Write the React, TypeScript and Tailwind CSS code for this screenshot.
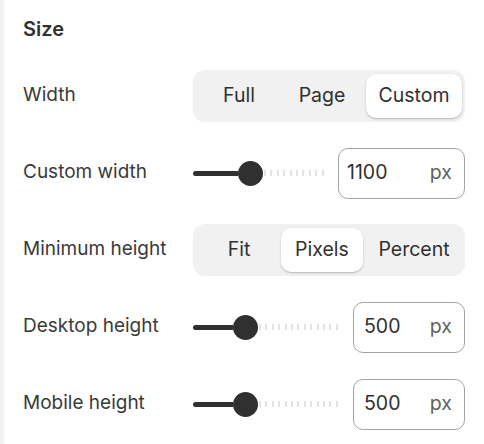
import React from "react"

type SegOption = { label: string; width: string }

const Segmented = ({ options, active }: { options: SegOption[]; active: number }) => (
  <div className="flex h-[52px] w-[272px] items-stretch rounded-[12px] bg-[#f1f1f1] py-1 pl-1 pr-[3px]">
    {options.map((opt, i) => (
      <div
        key={opt.label}
        className={`flex items-center justify-center pb-[1px] text-[19.5px] ${opt.width} ${i === options.length - 1 ? "ml-auto" : ""} ${
          i === active
            ? "rounded-[10px] bg-white shadow-[0_1px_1px_rgba(0,0,0,0.12),0_1px_3px_rgba(0,0,0,0.14)]"
            : ""
        }`}
      >
        {opt.label}
      </div>
    ))}
  </div>
)

const Slider = ({ fill }: { fill: number }) => (
  <div className="flex flex-1 items-center">
    <div className="h-[5px] rounded-l-full bg-[#303030]" style={{ width: fill }} />
    <div className="h-[25px] w-[25px] shrink-0 rounded-full bg-[#303030]" />
    <div className="ml-[1px] h-[6px] flex-1 rounded-r-[2px] bg-[repeating-linear-gradient(90deg,#e3e3e3_0_2px,transparent_2px_6.4px)]" />
  </div>
)

const NumberInput = ({ value, width, pl }: { value: string; width: string; pl: string }) => (
  <div
    className={`flex h-[51px] shrink-0 items-center justify-between rounded-[10px] border border-[#a3a3a3] pb-[1px] pr-[12px] text-[19.5px] ${width} ${pl}`}
  >
    <span className="text-[#303030]">{value}</span>
    <span className="text-[#616161]">px</span>
  </div>
)

const Row = ({ label, children }: { label: string; children: React.ReactNode }) => (
  <div className="flex h-[52px] items-center">
    <div className="w-[170px] shrink-0 pb-[1px] text-[19px] text-[#3a3a3a]">{label}</div>
    <div className="flex flex-1 items-center gap-[13px]">{children}</div>
  </div>
)

export default function App() {
  return (
    <div className="flex h-[444px] w-[484px] overflow-hidden bg-white font-['Inter',sans-serif] text-[#303030]">
      <div className="w-[4px] shrink-0 bg-[#f1f1f1]" />
      <div className="flex flex-1 flex-col pl-[19px] pr-[19px] pt-[16px]">
        <h2 className="text-[20px] font-semibold leading-[26px]">Size</h2>

        <div className="mt-[28px] flex flex-col gap-[25px]">
          <Row label="Width">
            <Segmented
              active={2}
              options={[
                { label: "Full", width: "w-[84px]" },
                { label: "Page", width: "w-[82px]" },
                { label: "Custom", width: "w-[96px]" },
              ]}
            />
          </Row>

          <Row label="Custom width">
            <Slider fill={45} />
            <NumberInput value="1100" width="w-[127px]" pl="pl-[8px]" />
          </Row>

          <Row label="Minimum height">
            <Segmented
              active={1}
              options={[
                { label: "Fit", width: "w-[84px]" },
                { label: "Pixels", width: "w-[82px]" },
                { label: "Percent", width: "w-[96px]" },
              ]}
            />
          </Row>

          <Row label="Desktop height">
            <Slider fill={40} />
            <NumberInput value="500" width="w-[112px]" pl="pl-[10px]" />
          </Row>

          <Row label="Mobile height">
            <Slider fill={40} />
            <NumberInput value="500" width="w-[112px]" pl="pl-[10px]" />
          </Row>
        </div>
      </div>
    </div>
  )
}
